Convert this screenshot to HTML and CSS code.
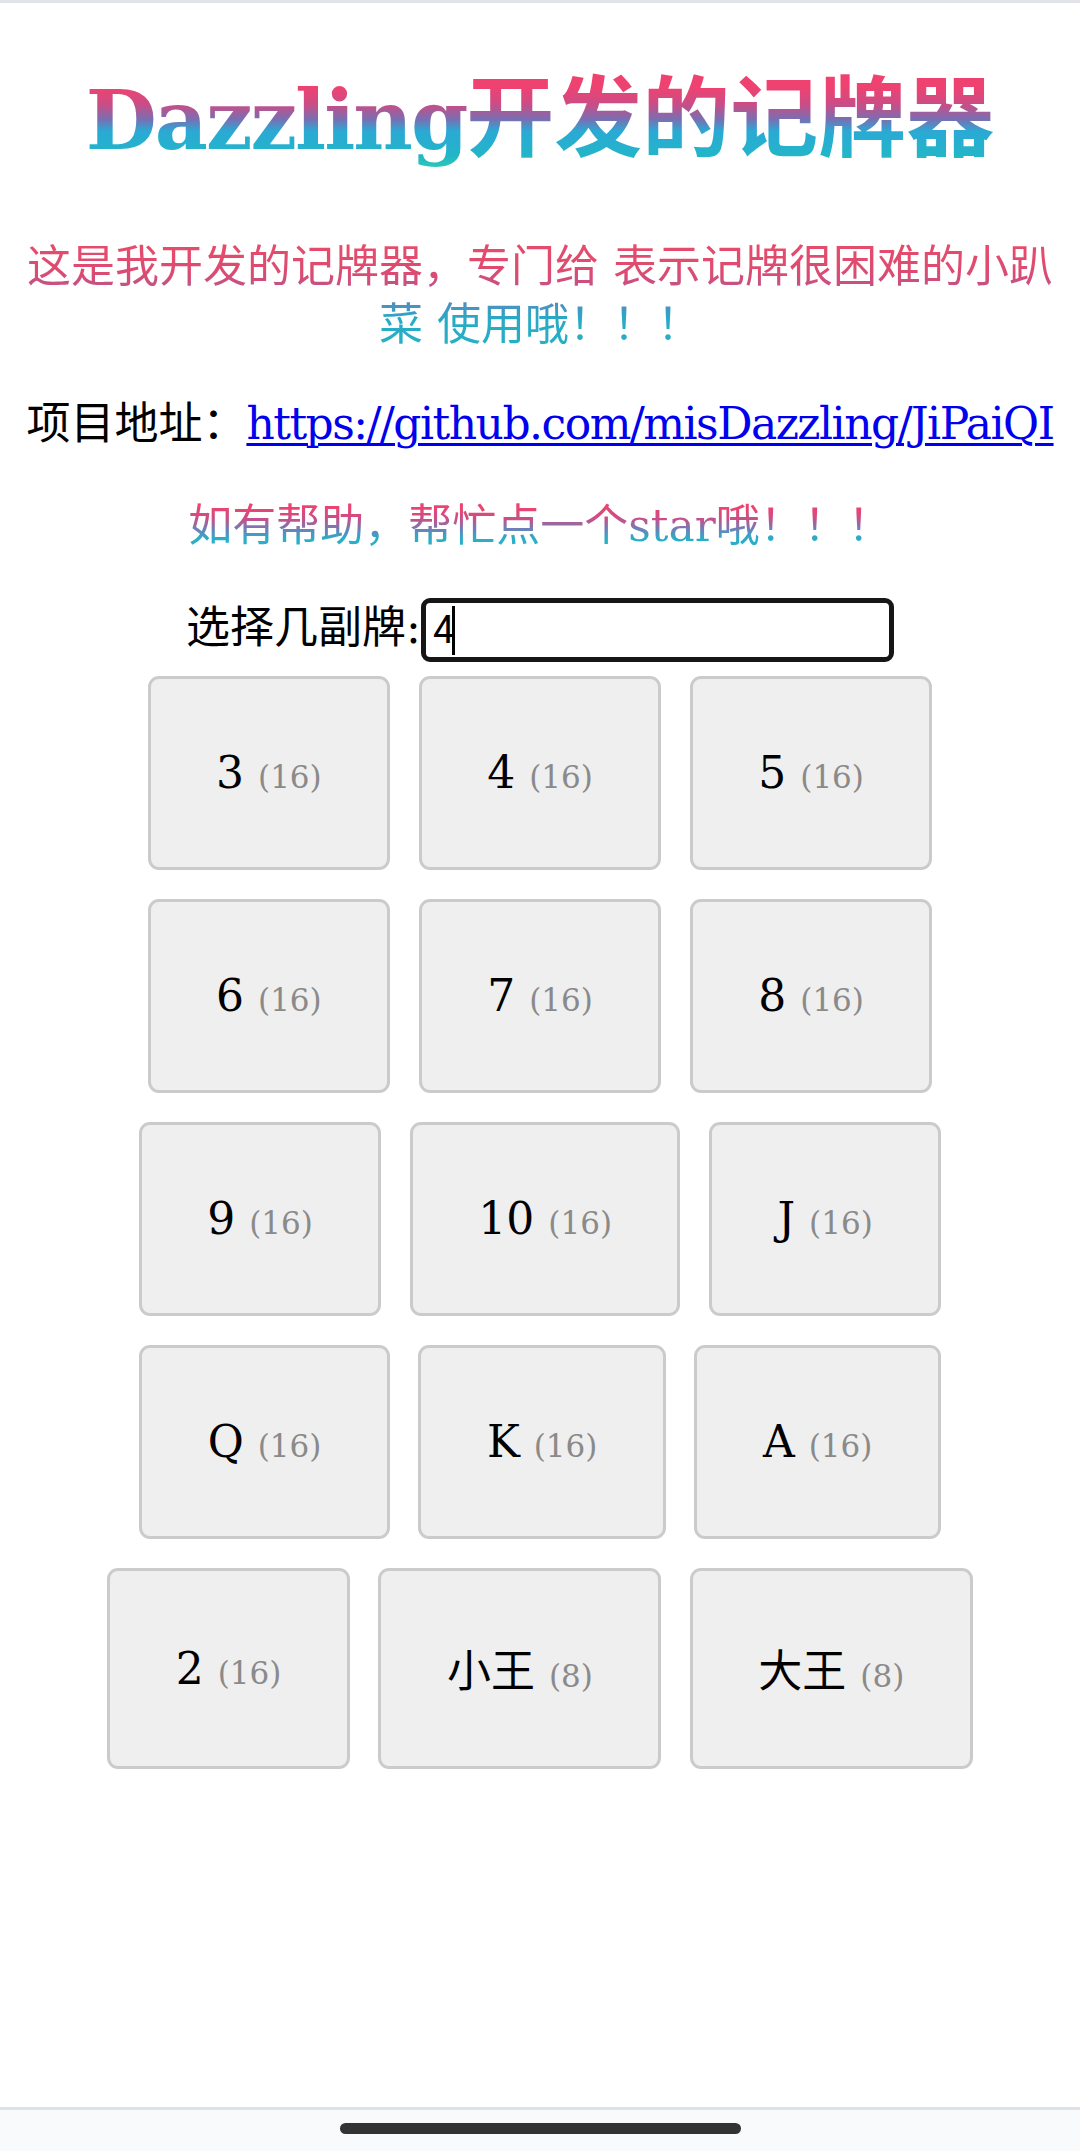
FILE: index.html
```html
<!DOCTYPE html>
<html lang="zh-CN">
<head>
<meta charset="utf-8">
<title>Dazzling开发的记牌器</title>
<link rel="stylesheet" href="styles.css">
</head>
<body>
<div class="top-bar"></div>
<main class="page">
  <h1 class="title"><span class="latin">Dazzling</span>开发的记牌器</h1>
  <p class="intro">这是我开发的记牌器，专门给 表示记牌很困难的小趴菜 使用哦！！！</p>
  <p class="repo">项目地址：<a href="https://github.com/misDazzling/JiPaiQI">https://github.com/misDazzling/JiPaiQI</a></p>
  <p class="star">如有帮助，帮忙点一个star哦！！！</p>
  <div class="deck-row">
    <label class="deck-label" for="deck">选择几副牌:</label>
    <span class="field"><input id="deck" class="deck-input" type="text" value="4"><span class="caret"></span></span>
  </div>
  <div class="cards">
    <button class="card">3 <span class="count">(16)</span></button>
    <button class="card">4 <span class="count">(16)</span></button>
    <button class="card">5 <span class="count">(16)</span></button>
    <button class="card">6 <span class="count">(16)</span></button>
    <button class="card">7 <span class="count">(16)</span></button>
    <button class="card">8 <span class="count">(16)</span></button>
    <button class="card">9 <span class="count">(16)</span></button>
    <button class="card">10 <span class="count">(16)</span></button>
    <button class="card">J <span class="count">(16)</span></button>
    <button class="card">Q <span class="count">(16)</span></button>
    <button class="card">K <span class="count">(16)</span></button>
    <button class="card">A <span class="count">(16)</span></button>
    <button class="card">2 <span class="count">(16)</span></button>
    <button class="card"><span class="cjk">小王</span> <span class="count">(8)</span></button>
    <button class="card"><span class="cjk">大王</span> <span class="count">(8)</span></button>
  </div>
</main>
<div class="nav-bar"><span class="home"></span></div>
</body>
</html>
```
FILE: styles.css
```css
* {
  box-sizing: border-box;
}

html,
body {
  margin: 0;
  padding: 0;
}

body {
  min-height: 100vh;
  display: flex;
  flex-direction: column;
  background: #ffffff;
}

.top-bar {
  flex: none;
  height: 3px;
  background: #e1e5ea;
}

.page {
  flex: 1;
  padding: 0 22px;
  text-align: center;
  font-family: "DejaVu Serif", "Noto Sans CJK SC", serif;
  font-size: 44px;
  line-height: 58px;
  color: #000;
}

.title {
  margin: 56px 0 59px;
  font-family: "DejaVu Serif", "Noto Sans CJK SC", serif;
  font-size: 88px;
  font-weight: 700;
  line-height: 118px;
  background: linear-gradient(180deg, #f0416f 0%, #ee4271 24%, #c94d86 38%, #7a6eb2 50%, #2aa9d4 60%, #22b5c9 80%, #2fd5a8 97%);
  -webkit-background-clip: text;
  background-clip: text;
  color: transparent;
}

.title .latin {
  font-size: 82px;
  letter-spacing: -2px;
}

.intro {
  margin: 0 0 41px;
  background: linear-gradient(180deg, #e94b69 0%, #dc4b72 30%, #b85590 47%, #4e8fc0 56%, #27aac6 70%, #25b2c4 100%);
  -webkit-background-clip: text;
  background-clip: text;
  color: transparent;
}

.repo {
  margin: 41px 0 44px;
  white-space: nowrap;
}

.repo a {
  color: #0000ee;
  letter-spacing: -1.5px;
  text-decoration: underline;
  text-decoration-thickness: 3px;
  text-underline-offset: 4px;
}

.star {
  margin: 44px 0 43px;
  background: linear-gradient(180deg, #ec4470 18%, #c84f88 38%, #6e7fb8 55%, #2aaec8 72%, #28b2c6 100%);
  -webkit-background-clip: text;
  background-clip: text;
  color: transparent;
}

.deck-row {
  display: flex;
  justify-content: center;
  align-items: baseline;
}

.deck-label {
  font-size: 44px;
  line-height: 58px;
}

.field {
  position: relative;
  display: inline-block;
}

.deck-input {
  display: block;
  width: 473px;
  height: 64px;
  margin: 0;
  padding: 0 7px;
  border: 5px solid #161616;
  border-radius: 9px;
  font-family: Roboto, "Noto Sans", sans-serif;
  font-size: 38px;
  color: #000;
  background: #fff;
  caret-color: transparent;
  outline: none;
}

.caret {
  position: absolute;
  left: 31px;
  top: 8px;
  width: 3px;
  height: 49px;
  background: #000;
}

.cards {
  display: flex;
  flex-wrap: wrap;
  justify-content: center;
  gap: 29px 28.5px;
  max-width: 960px;
  margin: 14px auto 0;
}

.card {
  margin: 0;
  padding: 65px 65.5px;
  border: 3px solid #cbcbcb;
  border-radius: 11px;
  background: #efefef;
  color: #000;
  font-family: "DejaVu Serif", "Noto Sans CJK SC", serif;
  font-size: 44px;
  line-height: 58px;
  white-space: nowrap;
}

.card .count {
  font-size: 31px;
  line-height: 1;
  color: #8a8a8a;
}

.card .cjk {
  font-family: "Noto Sans CJK SC", sans-serif;
  line-height: 64px;
}

.nav-bar {
  flex: none;
  height: 44px;
  padding-top: 13px;
  border-top: 3px solid #dde2e8;
  background: #f9fafc;
  display: flex;
  justify-content: center;
  align-items: flex-start;
}

.home {
  display: block;
  width: 401px;
  height: 11px;
  border-radius: 6px;
  background: #333333;
}
```
